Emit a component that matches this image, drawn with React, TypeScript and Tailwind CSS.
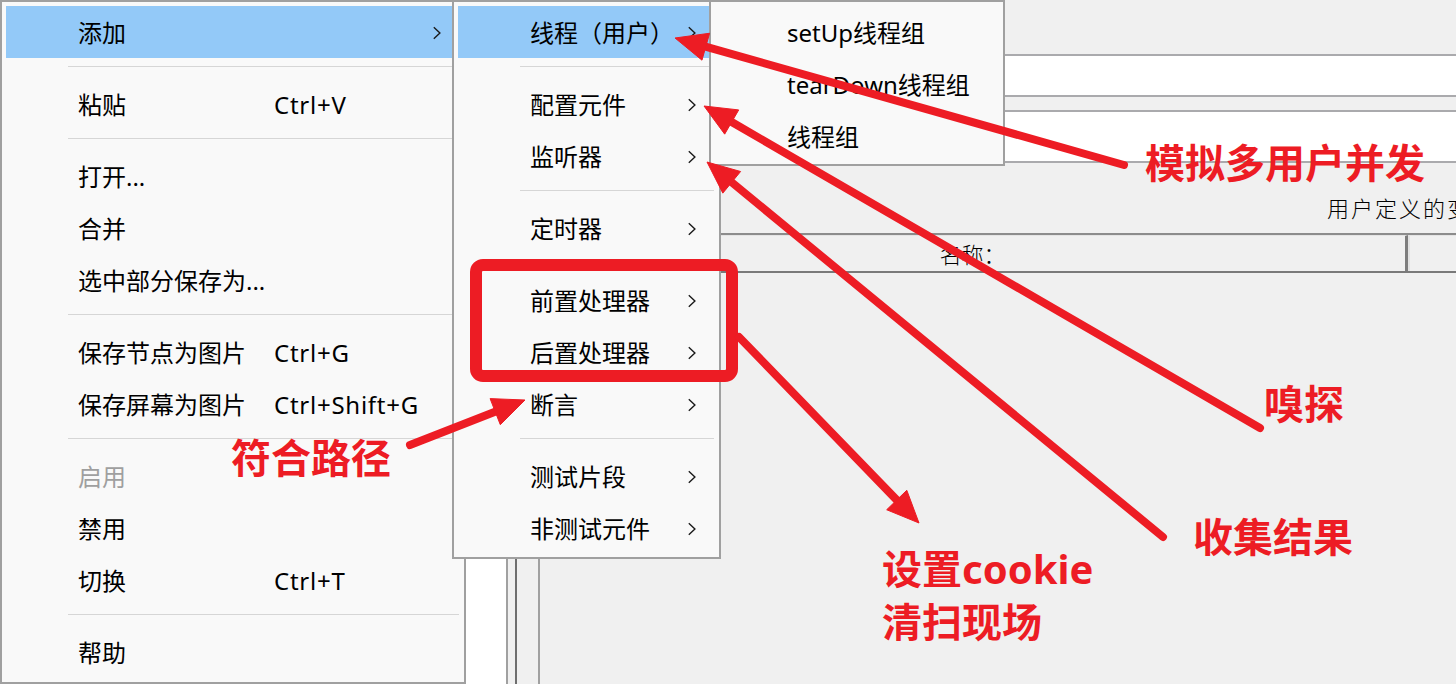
import React from 'react';

type Item =
  | { sep: true }
  | { label: string; shortcut?: string; sub?: boolean; disabled?: boolean; active?: boolean };

const SEP: Item = { sep: true };

const mainItems: Item[] = [
  { label: '添加', sub: true, active: true },
  SEP,
  { label: '粘贴', shortcut: 'Ctrl+V' },
  SEP,
  { label: '打开...' },
  { label: '合并' },
  { label: '选中部分保存为...' },
  SEP,
  { label: '保存节点为图片', shortcut: 'Ctrl+G' },
  { label: '保存屏幕为图片', shortcut: 'Ctrl+Shift+G' },
  SEP,
  { label: '启用', disabled: true },
  { label: '禁用' },
  { label: '切换', shortcut: 'Ctrl+T' },
  SEP,
  { label: '帮助' },
];

const addItems: Item[] = [
  { label: '线程（用户）', sub: true, active: true },
  SEP,
  { label: '配置元件', sub: true },
  { label: '监听器', sub: true },
  SEP,
  { label: '定时器', sub: true },
  SEP,
  { label: '前置处理器', sub: true },
  { label: '后置处理器', sub: true },
  { label: '断言', sub: true },
  SEP,
  { label: '测试片段', sub: true },
  { label: '非测试元件', sub: true },
];

const threadItems: Item[] = [
  { label: 'setUp线程组' },
  { label: 'tearDown线程组' },
  { label: '线程组' },
];

function Chevron() {
  return (
    <svg width="10" height="14" viewBox="0 0 10 14" className="shrink-0">
      <path d="M1.8 1.2 L7.9 7 L1.8 12.8" fill="none" stroke="#1a1a1a" strokeWidth="1.4" />
    </svg>
  );
}

function MenuList({ items, withShortcuts }: { items: Item[]; withShortcuts?: boolean }) {
  return (
    <>
      {items.map((item, i) => {
        if ('sep' in item) {
          return (
            <div key={i} className="h-[20px] pt-[8px] pl-[62px] pr-[1px]">
              <div className="h-px bg-[#d6d6d6]" />
            </div>
          );
        }
        return (
          <div
            key={i}
            className={`flex items-center h-[52px] pl-[72px] pr-[18px] pt-[2px] ${item.active ? 'bg-[#93c9f8]' : ''} ${
              item.disabled ? 'text-[#9f9f9f]' : 'text-black'
            }`}
          >
            <span className={`whitespace-nowrap ${withShortcuts ? 'w-[196px] shrink-0' : 'flex-1'}`}>{item.label}</span>
            {withShortcuts && <span className="flex-1 whitespace-nowrap tracking-[0.75px]">{item.shortcut}</span>}
            {item.sub && <Chevron />}
          </div>
        );
      })}
    </>
  );
}

// red call-out arrows: start point -> tip
const arrows = [
  [1124, 165, 675, 38],
  [1260, 428, 704, 106],
  [1163, 537, 707, 162],
  [739, 337, 919, 523],
  [410, 445, 525, 400],
].map(([sx, sy, tx, ty]) => {
  const dx = tx - sx;
  const dy = ty - sy;
  const len = Math.hypot(dx, dy);
  const ux = dx / len;
  const uy = dy / len;
  const L = 32;
  const W = 14;
  const bx = tx - ux * L;
  const by = ty - uy * L;
  return {
    x1: sx,
    y1: sy,
    x2: bx + ux * 4,
    y2: by + uy * 4,
    head: `${tx},${ty} ${bx - uy * W},${by + ux * W} ${bx + uy * W},${by - ux * W}`,
  };
});

export default function App() {
  return (
    <div
      className="relative flex w-[1456px] h-[684px] overflow-hidden bg-[#f0f0f0] text-[24px]"
      style={{ fontFamily: '"Noto Sans", "Noto Sans CJK SC", sans-serif' }}
    >
      {/* tree panel */}
      <div className="w-[506px] shrink-0 bg-white" />
      {/* split pane divider */}
      <div className="w-[11px] shrink-0 border-l-2 border-r-2 border-l-[#a0a0a0] border-r-[#6e6e6e]" />
      <div className="w-[21px] shrink-0" />

      {/* test plan panel */}
      <div className="flex-1 flex flex-col border-l-2 border-[#a0a0a0] min-w-0" style={{ fontFamily: '"Noto Sans CJK SC", sans-serif' }}>
        <div className="h-[54px] shrink-0" />
        <div className="h-[43px] shrink-0 ml-[120px] bg-white border-y-2 border-[#aaaaad]" />
        <div className="h-[13px] shrink-0" />
        <div className="h-[53px] shrink-0 ml-[120px] bg-white border-y-2 border-[#aaaaad]" />
        <div className="h-[70px] shrink-0 pl-[787px] pt-[31px] text-[22px] leading-[26px] tracking-[2px] font-light text-black whitespace-nowrap">
          用户定义的变量
        </div>
        <div className="flex h-[40px] shrink-0 border-t-2 border-b-2 border-t-[#8c8c8c] border-b-[#7a7a7a]">
          <div className="w-[868px] shrink-0 flex items-center justify-center border-t border-r-[3px] border-t-[#e4e4e4] border-r-[#7d7d7d] text-[22px] font-light text-black">
            名称：
          </div>
          <div className="flex-1 border-t border-l-2 border-t-[#e4e4e4] border-l-[#e2e2e2]" />
        </div>
        <div className="flex-1" />
      </div>

      {/* context menu */}
      <div className="absolute left-0 top-0 w-[466px] border-2 border-[#a0a0a0] bg-[#f9f9f9] p-[4px]">
        <MenuList items={mainItems} withShortcuts />
      </div>
      {/* 添加 submenu */}
      <div className="absolute left-[452px] top-0 w-[269px] border-2 border-[#a0a0a0] bg-[#f9f9f9] px-[4px] pt-[4px] pb-[3px]">
        <MenuList items={addItems} />
      </div>
      {/* 线程 submenu */}
      <div className="absolute left-[709px] top-0 w-[296px] border-2 border-[#a0a0a0] bg-[#f9f9f9] px-[4px] pt-[4px] pb-[2px]">
        <MenuList items={threadItems} />
      </div>

      {/* annotations */}
      <svg className="absolute inset-0 pointer-events-none" width="1456" height="684" viewBox="0 0 1456 684">
        <rect x="476" y="265" width="256" height="111" rx="7" fill="none" stroke="#ed1c24" strokeWidth="12" />
        {arrows.map((a, i) => (
          <g key={i} fill="#ed1c24" stroke="#ed1c24">
            <line x1={a.x1} y1={a.y1} x2={a.x2} y2={a.y2} strokeWidth="8" strokeLinecap="round" />
            <polygon points={a.head} strokeWidth="1" strokeLinejoin="round" />
          </g>
        ))}
      </svg>
      <div className="absolute left-[1145px] top-[143px] text-[40px] leading-none font-bold text-[#ed1c24] whitespace-nowrap">
        模拟多用户并发
      </div>
      <div className="absolute left-[1264px] top-[384px] text-[40px] leading-none font-bold text-[#ed1c24] whitespace-nowrap">
        嗅探
      </div>
      <div className="absolute left-[1193px] top-[517px] text-[40px] leading-none font-bold text-[#ed1c24] whitespace-nowrap">
        收集结果
      </div>
      <div className="absolute left-[882px] top-[542px] text-[40px] leading-[53px] font-bold text-[#ed1c24] whitespace-nowrap">
        <div>设置cookie</div>
        <div>清扫现场</div>
      </div>
      <div className="absolute left-[231px] top-[438px] text-[40px] leading-none font-bold text-[#ed1c24] whitespace-nowrap">
        符合路径
      </div>
    </div>
  );
}
